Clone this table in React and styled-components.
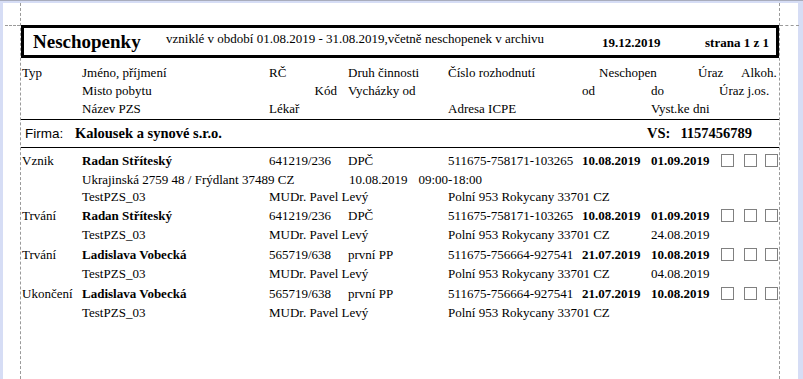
import React from 'react'
import styled, { createGlobalStyle } from 'styled-components'

const GlobalStyle = createGlobalStyle`
  html, body, #root {
    margin: 0;
    padding: 0;
    height: 100%;
  }
  body {
    background: #d6ddf5;
    overflow: hidden;
    font-family: 'Liberation Serif', 'Times New Roman', serif;
    color: #000;
  }
`

const COLS = '61px 187px 79px 100px 134px 69px 70px 23px 21px 13px'

const rows = [
  {
    type: 'Vznik',
    name: 'Radan Stříteský',
    rc: '641219/236',
    druh: 'DPČ',
    cislo: '511675-758171-103265',
    od: '10.08.2019',
    do: '01.09.2019',
    address: 'Ukrajinská 2759 48 / Frýdlant 37489 CZ',
    vych: '10.08.2019',
    vychTime: '09:00-18:00',
    pzs: 'TestPZS_03',
    lekar: 'MUDr. Pavel Levý',
    icpe: 'Polní 953 Rokycany 33701 CZ'
  },
  {
    type: 'Trvání',
    name: 'Radan Stříteský',
    rc: '641219/236',
    druh: 'DPČ',
    cislo: '511675-758171-103265',
    od: '10.08.2019',
    do: '01.09.2019',
    pzs: 'TestPZS_03',
    lekar: 'MUDr. Pavel Levý',
    icpe: 'Polní 953 Rokycany 33701 CZ',
    vyst: '24.08.2019'
  },
  {
    type: 'Trvání',
    name: 'Ladislava Vobecká',
    rc: '565719/638',
    druh: 'první PP',
    cislo: '511675-756664-927541',
    od: '21.07.2019',
    do: '10.08.2019',
    pzs: 'TestPZS_03',
    lekar: 'MUDr. Pavel Levý',
    icpe: 'Polní 953 Rokycany 33701 CZ',
    vyst: '04.08.2019'
  },
  {
    type: 'Ukončení',
    name: 'Ladislava Vobecká',
    rc: '565719/638',
    druh: 'první PP',
    cislo: '511675-756664-927541',
    od: '21.07.2019',
    do: '10.08.2019',
    pzs: 'TestPZS_03',
    lekar: 'MUDr. Pavel Levý',
    icpe: 'Polní 953 Rokycany 33701 CZ'
  }
]

const Record = ({ r }) => (
  <>
    <GridRow $h={20}>
      <Cell $col='1' $pl={1}>{r.type}</Cell>
      <Cell $col='2' $bold>{r.name}</Cell>
      <Cell $col='3'>{r.rc}</Cell>
      <Cell $col='4'>{r.druh}</Cell>
      <Cell $col='5'>{r.cislo}</Cell>
      <Cell $col='6' $bold>{r.od}</Cell>
      <Cell $col='7' $bold>{r.do}</Cell>
      <Cell $col='8'><Check /></Cell>
      <Cell $col='9'><Check /></Cell>
      <Cell $col='10'><Check /></Cell>
    </GridRow>
    {r.address && (
      <GridRow $h={18}>
        <Cell $col='2 / 4'>{r.address}</Cell>
        <Cell $col='4 / 6' $pl={1}>
          <Pair>
            <span>{r.vych}</span>
            <span>{r.vychTime}</span>
          </Pair>
        </Cell>
      </GridRow>
    )}
    <GridRow $h={r.address ? 17 : 19}>
      <Cell $col='2'>{r.pzs}</Cell>
      <Cell $col='3 / 5'>{r.lekar}</Cell>
      <Cell $col='5 / 7'>{r.icpe}</Cell>
      {r.vyst && <Cell $col='7'>{r.vyst}</Cell>}
    </GridRow>
  </>
)

const App = () => (
  <>
    <GlobalStyle />
    <Desk>
      <Sheet>
        <Content>
          <TitleBox>
            <Title>Neschopenky</Title>
            <Subtitle>
              vzniklé v období 01.08.2019 - 31.08.2019,včetně neschopenek v archivu
            </Subtitle>
            <PrintDate>19.12.2019</PrintDate>
            <PageNo>strana 1 z 1</PageNo>
          </TitleBox>

          <HeadBlock>
            <GridRow $h={17}>
              <Cell $col='1' $pl={1}>Typ</Cell>
              <Cell $col='2'>Jméno, příjmení</Cell>
              <Cell $col='3'>RČ</Cell>
              <Cell $col='4'>Druh činnosti</Cell>
              <Cell $col='5'>Číslo rozhodnutí</Cell>
              <Cell $col='6 / 8' $pl={17}>Neschopen</Cell>
              <Cell $col='7 / 9' $pl={47}>Úraz</Cell>
              <Cell $col='8 / 11' $pl={20}>Alkoh.</Cell>
            </GridRow>
            <GridRow $h={18}>
              <Cell $col='2'>Misto pobytu</Cell>
              <Cell $col='3' $right $pr={11}>Kód</Cell>
              <Cell $col='4'>Vycházky od</Cell>
              <Cell $col='6'>od</Cell>
              <Cell $col='7'>do</Cell>
              <Cell $col='8 / 11' $pl={-2}>Úraz j.os.</Cell>
            </GridRow>
            <GridRow $h={18}>
              <Cell $col='2'>Název PZS</Cell>
              <Cell $col='3'>Lékař</Cell>
              <Cell $col='5'>Adresa ICPE</Cell>
              <Cell $col='7'>Vyst.ke dni</Cell>
            </GridRow>
          </HeadBlock>

          <FirmBar>
            <FirmLabel>Firma:</FirmLabel>
            <FirmName>Kalousek a synové s.r.o.</FirmName>
            <Vs>
              <span>VS:</span>
              <span>1157456789</span>
            </Vs>
          </FirmBar>

          <Body>
            {rows.map((r, i) => (
              <Record key={i} r={r} />
            ))}
          </Body>
        </Content>
      </Sheet>
    </Desk>
  </>
)

export default App

const Desk = styled.div`
  height: 100%;
  box-sizing: border-box;
  border-top: 1px solid #a8acbc;
  padding: 2px 5px 0 3px;
  display: flex;
`

const Sheet = styled.div`
  flex: 1;
  background: #fff;
  padding-left: 17px;
  display: flex;
`

const Content = styled.div`
  position: relative;
  width: 760px;
  box-sizing: border-box;
  border-left: 1px dashed #9a9a9a;
  border-right: 1px dashed #9a9a9a;
  padding-top: 22px;

  &::before,
  &::after {
    content: '';
    position: absolute;
    top: 22px;
    border-top: 1px dashed #9a9a9a;
  }
  &::before {
    left: -16px;
    width: 15px;
  }
  &::after {
    left: calc(100% + 1px);
    width: 19px;
  }
`

const TitleBox = styled.div`
  height: 33px;
  box-sizing: border-box;
  border: 3px solid #000;
  display: flex;
  align-items: center;
  padding-left: 9px;
  white-space: nowrap;
`

const Title = styled.div`
  width: 133px;
  font-size: 19px;
  font-weight: bold;
  padding-top: 1px;
`

const Subtitle = styled.div`
  width: 436px;
  align-self: flex-start;
  padding-top: 3px;
  font-size: 13px;
  line-height: 16px;
`

const PrintDate = styled.div`
  width: 103px;
  font-size: 13px;
  font-weight: bold;
  padding-top: 3px;
`

const PageNo = styled.div`
  font-size: 13px;
  font-weight: bold;
  padding-top: 3px;
`

const HeadBlock = styled.div`
  margin-top: 6px;
  padding-bottom: 2px;
  border-bottom: 1px solid #000;
`

const GridRow = styled.div`
  display: grid;
  grid-template-columns: ${COLS};
  height: ${props => props.$h}px;
  align-items: center;
  font-size: 13px;
  line-height: 15px;
  white-space: nowrap;
`

const Cell = styled.div`
  grid-column: ${props => props.$col};
  grid-row: 1;
  padding-left: ${props => (props.$pl > 0 ? props.$pl : 0)}px;
  margin-left: ${props => (props.$pl < 0 ? props.$pl : 0)}px;
  padding-right: ${props => props.$pr || 0}px;
  text-align: ${props => (props.$right ? 'right' : 'left')};
  font-weight: ${props => (props.$bold ? 'bold' : 'normal')};
  display: flex;
  justify-content: ${props => (props.$right ? 'flex-end' : 'flex-start')};
  align-items: center;
`

const Pair = styled.div`
  display: flex;
  gap: 11px;
`

const Check = styled.div`
  width: 13px;
  height: 13px;
  box-sizing: border-box;
  border: 1px solid #808080;
`

const FirmBar = styled.div`
  height: 27px;
  display: flex;
  align-items: center;
  padding-left: 4px;
  border-bottom: 1px solid #000;
  white-space: nowrap;
`

const FirmLabel = styled.span`
  width: 50px;
  font-family: 'Liberation Sans', Arial, sans-serif;
  font-size: 13.5px;
`

const FirmName = styled.span`
  width: 572px;
  font-size: 14.5px;
  font-weight: bold;
`

const Vs = styled.span`
  display: flex;
  gap: 10px;
  font-size: 14.5px;
  font-weight: bold;
`

const Body = styled.div`
  padding-top: 2px;
`
